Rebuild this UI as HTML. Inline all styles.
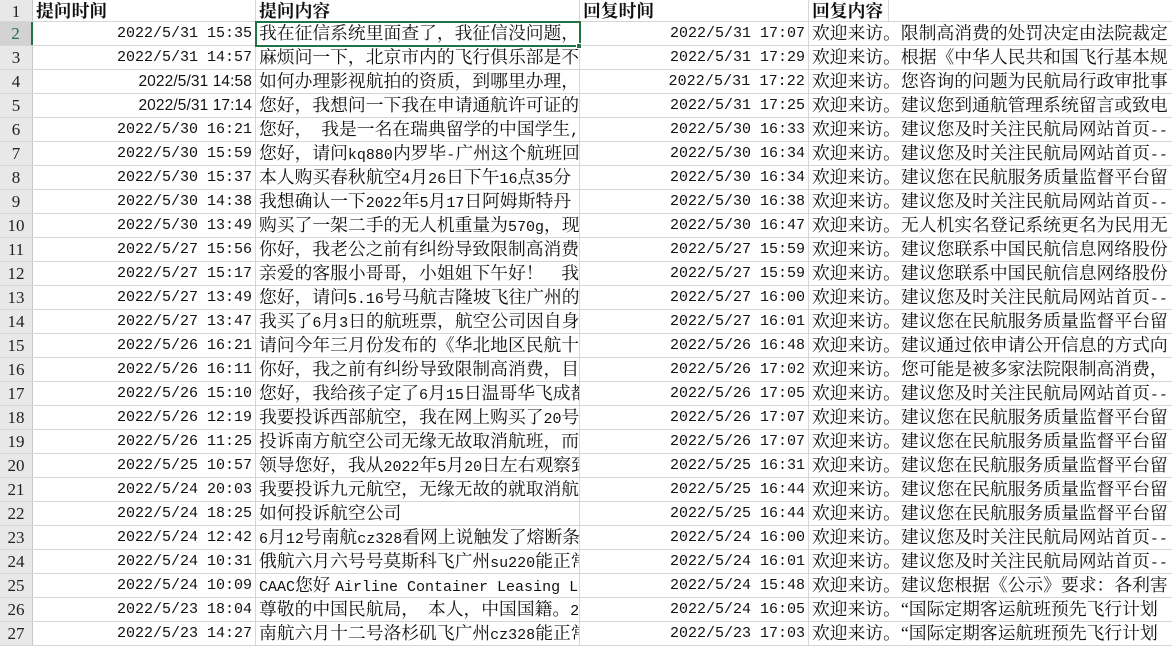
<!DOCTYPE html>
<html><head><meta charset="utf-8"><style>
*{margin:0;padding:0;box-sizing:border-box}
body{width:1172px;height:647px;overflow:hidden;background:#fff;position:relative;font-family:"Liberation Serif","Noto Serif CJK SC",serif;color:#111}
.r{position:absolute;left:0;width:1172px;height:24px;border-bottom:1px solid #d6d6d6}
.h{position:absolute;left:0;top:0;width:33px;height:100%;background:#e8e8e8;border-right:1px solid #c8c8c8;text-align:center;font-size:17px;line-height:23px;color:#222}
.c{position:absolute;top:0;height:100%;overflow:hidden;white-space:nowrap;line-height:23px;border-right:1px solid #d6d6d6}
.a{left:33px;width:223px;text-align:right;padding-right:3px;font-family:"Liberation Mono",monospace;font-size:15px}
.s{font-family:"Liberation Sans",sans-serif;font-size:15.5px;letter-spacing:.1px}
.b{left:256px;width:324px;padding-left:3px;font-size:17.8px}
.cc{left:580px;width:229px;text-align:right;padding-right:3px;font-family:"Liberation Mono",monospace;font-size:15px}
.d{left:809px;width:363px;padding-left:3px;font-size:17.8px;border-right:none}
.m{font-family:"Liberation Mono",monospace;font-size:15px}
.hd{font-weight:bold;font-size:17.8px;padding-left:3px;text-align:left;font-family:"Liberation Serif","Noto Serif CJK SC",serif}
</style></head><body>
<div class="r" style="top:0;height:22px"><div class="h">1</div>
<div class="c a hd" style="text-align:left">提问时间</div><div class="c b hd">提问内容</div><div class="c cc hd" style="text-align:left">回复时间</div><div class="c d hd" style="width:80px;border-right:1px solid #d6d6d6">回复内容</div></div>
<div id="rows"></div>
<script>
var D=[
["2022/5/31 15:35","我在征信系统里面查了，我征信没问题，","2022/5/31 17:07","欢迎来访。限制高消费的处罚决定由法院裁定"],
["2022/5/31 14:57","麻烦问一下，北京市内的飞行俱乐部是不","2022/5/31 17:29","欢迎来访。根据《中华人民共和国飞行基本规"],
["2022/5/31 14:58","如何办理影视航拍的资质，到哪里办理，","2022/5/31 17:22","欢迎来访。您咨询的问题为民航局行政审批事",1],
["2022/5/31 17:14","您好，我想问一下我在申请通航许可证的","2022/5/31 17:25","欢迎来访。建议您到通航管理系统留言或致电",2],
["2022/5/30 16:21","您好，　我是一名在瑞典留学的中国学生,","2022/5/30 16:33","欢迎来访。建议您及时关注民航局网站首页--"],
["2022/5/30 15:59","您好，请问kq880内罗毕-广州这个航班回","2022/5/30 16:34","欢迎来访。建议您及时关注民航局网站首页--"],
["2022/5/30 15:37","本人购买春秋航空4月26日下午16点35分","2022/5/30 16:34","欢迎来访。建议您在民航服务质量监督平台留"],
["2022/5/30 14:38","我想确认一下2022年5月17日阿姆斯特丹","2022/5/30 16:38","欢迎来访。建议您及时关注民航局网站首页--"],
["2022/5/30 13:49","购买了一架二手的无人机重量为570g，现","2022/5/30 16:47","欢迎来访。无人机实名登记系统更名为民用无"],
["2022/5/27 15:56","你好，我老公之前有纠纷导致限制高消费","2022/5/27 15:59","欢迎来访。建议您联系中国民航信息网络股份"],
["2022/5/27 15:17","亲爱的客服小哥哥，小姐姐下午好！　我","2022/5/27 15:59","欢迎来访。建议您联系中国民航信息网络股份"],
["2022/5/27 13:49","您好，请问5.16号马航吉隆坡飞往广州的","2022/5/27 16:00","欢迎来访。建议您及时关注民航局网站首页--"],
["2022/5/27 13:47","我买了6月3日的航班票，航空公司因自身","2022/5/27 16:01","欢迎来访。建议您在民航服务质量监督平台留"],
["2022/5/26 16:21","请问今年三月份发布的《华北地区民航十","2022/5/26 16:48","欢迎来访。建议通过依申请公开信息的方式向"],
["2022/5/26 16:11","你好，我之前有纠纷导致限制高消费，目","2022/5/26 17:02","欢迎来访。您可能是被多家法院限制高消费，"],
["2022/5/26 15:10","您好，我给孩子定了6月15日温哥华飞成都","2022/5/26 17:05","欢迎来访。建议您及时关注民航局网站首页--"],
["2022/5/26 12:19","我要投诉西部航空，我在网上购买了20号","2022/5/26 17:07","欢迎来访。建议您在民航服务质量监督平台留"],
["2022/5/26 11:25","投诉南方航空公司无缘无故取消航班，而","2022/5/26 17:07","欢迎来访。建议您在民航服务质量监督平台留"],
["2022/5/25 10:57","领导您好，我从2022年5月20日左右观察到","2022/5/25 16:31","欢迎来访。建议您在民航服务质量监督平台留"],
["2022/5/24 20:03","我要投诉九元航空，无缘无故的就取消航","2022/5/25 16:44","欢迎来访。建议您在民航服务质量监督平台留"],
["2022/5/24 18:25","如何投诉航空公司","2022/5/25 16:44","欢迎来访。建议您在民航服务质量监督平台留"],
["2022/5/24 12:42","6月12号南航cz328看网上说触发了熔断条","2022/5/24 16:00","欢迎来访。建议您及时关注民航局网站首页--"],
["2022/5/24 10:31","俄航六月六号号莫斯科飞广州su220能正常","2022/5/24 16:01","欢迎来访。建议您及时关注民航局网站首页--"],
["2022/5/24 10:09","CAAC您好 Airline Container Leasing Ltd","2022/5/24 15:48","欢迎来访。建议您根据《公示》要求：各利害"],
["2022/5/23 18:04","尊敬的中国民航局，　本人，中国国籍。2","2022/5/24 16:05","欢迎来访。“国际定期客运航班预先飞行计划"],
["2022/5/23 14:27","南航六月十二号洛杉矶飞广州cz328能正常","2022/5/23 17:03","欢迎来访。“国际定期客运航班预先飞行计划"]];
function w(t){return t.replace(/[\x21-\x7e][\x20-\x7e]*/g,function(x){return '<span class="m">'+x+'</span>';});}
var h="";
D.forEach(function(r,i){
 var top=22+i*24;
 var hs=i==0?'background:#d2d2d2;border-right:2px solid #217346;color:#217346':'';
 h+='<div class="r" style="top:'+top+'px"><div class="h" style="'+hs+'">'+(i+2)+'</div>'+
 '<div class="c a'+(r[4]?' s':'')+'">'+r[0]+'</div><div class="c b">'+w(r[1])+'</div><div class="c cc'+(r[4]==1?' s':'')+'">'+r[2]+'</div><div class="c d">'+w(r[3])+'</div></div>';
});
document.getElementById("rows").outerHTML=h;
</script>
<div style="position:absolute;left:255px;top:21px;width:326px;height:26px;border:2px solid #217346"></div>
<div style="position:absolute;left:576px;top:43px;width:6px;height:6px;background:#217346;border:1px solid #fff"></div>
</body></html>
